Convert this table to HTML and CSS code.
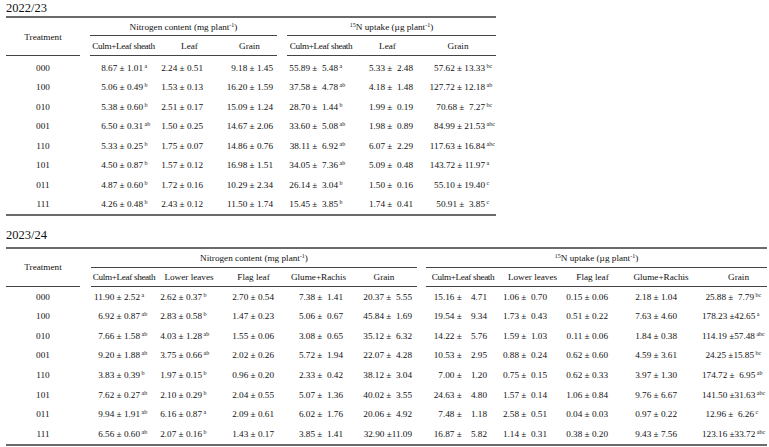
FILE: index.html
```
<!DOCTYPE html>
<html lang="en">
<head>
<meta charset="utf-8">
<title>Nitrogen content and 15N uptake</title>
<link rel="stylesheet" href="styles.css">
</head>
<body>
<div class="page">
  <div class="title">2022/23</div>
  <table class="tbl t1">
    <colgroup>
      <col class="c74"><col class="c10"><col class="c67"><col class="c65"><col class="c55"><col class="c10"><col class="c68"><col class="c65"><col class="c76">
    </colgroup>
    <thead>
      <tr class="hr1">
        <th rowspan="2" class="trt">Treatment</th>
        <th rowspan="2"></th>
        <th colspan="3" class="grp">Nitrogen content (mg plant<sup>-1</sup>)</th>
        <th rowspan="2"></th>
        <th colspan="3" class="grp"><sup>15</sup>N uptake (µg plant<sup>-1</sup>)</th>
      </tr>
      <tr class="hr2">
        <th class="sub culm">Culm+Leaf sheath</th>
        <th class="sub">Leaf</th>
        <th class="sub">Grain</th>
        <th class="sub culm">Culm+Leaf sheath</th>
        <th class="sub">Leaf</th>
        <th class="sub">Grain</th>
      </tr>
    </thead>
    <tbody>
      <tr class="first"><td>000</td><td></td><td>8.67 ± 1.01<span class="s">a</span></td><td>2.24 ± 0.51</td><td>9.18 ± 1.45</td><td></td><td>55.89 ±  5.48<span class="s">a</span></td><td>5.33 ±  2.48</td><td>57.62 ± 13.33<span class="s">bc</span></td></tr>
      <tr><td>100</td><td></td><td>5.06 ± 0.49<span class="s">b</span></td><td>1.53 ± 0.13</td><td>16.20 ± 1.59</td><td></td><td>37.58 ±  4.78<span class="s">ab</span></td><td>4.18 ±  1.48</td><td>127.72 ± 12.18<span class="s">ab</span></td></tr>
      <tr><td>010</td><td></td><td>5.38 ± 0.60<span class="s">b</span></td><td>2.51 ± 0.17</td><td>15.09 ± 1.24</td><td></td><td>28.70 ±  1.44<span class="s">b</span></td><td>1.99 ±  0.19</td><td>70.68 ±  7.27<span class="s">bc</span></td></tr>
      <tr><td>001</td><td></td><td>6.50 ± 0.31<span class="s">ab</span></td><td>1.50 ± 0.25</td><td>14.67 ± 2.06</td><td></td><td>33.60 ±  5.08<span class="s">ab</span></td><td>1.98 ±  0.89</td><td>84.99 ± 21.53<span class="s">abc</span></td></tr>
      <tr><td>110</td><td></td><td>5.33 ± 0.25<span class="s">b</span></td><td>1.75 ± 0.07</td><td>14.86 ± 0.76</td><td></td><td>38.11 ±  6.92<span class="s">ab</span></td><td>6.07 ±  2.29</td><td>117.63 ± 16.84<span class="s">abc</span></td></tr>
      <tr><td>101</td><td></td><td>4.50 ± 0.87<span class="s">b</span></td><td>1.57 ± 0.12</td><td>16.98 ± 1.51</td><td></td><td>34.05 ±  7.36<span class="s">ab</span></td><td>5.09 ±  0.48</td><td>143.72 ± 11.97<span class="s">a</span></td></tr>
      <tr><td>011</td><td></td><td>4.87 ± 0.60<span class="s">b</span></td><td>1.72 ± 0.16</td><td>10.29 ± 2.34</td><td></td><td>26.14 ±  3.04<span class="s">b</span></td><td>1.50 ±  0.16</td><td>55.10 ± 19.40<span class="s">c</span></td></tr>
      <tr><td>111</td><td></td><td>4.26 ± 0.48<span class="s">b</span></td><td>2.43 ± 0.12</td><td>11.50 ± 1.74</td><td></td><td>15.45 ±  3.85<span class="s">b</span></td><td>1.74 ±  0.41</td><td>50.91 ±  3.85<span class="s">c</span></td></tr>
    </tbody>
  </table>

  <div class="title second">2023/24</div>
  <table class="tbl t2">
    <colgroup>
      <col class="c74"><col class="c11"><col class="c66"><col class="c64"><col class="c65"><col class="c65"><col class="c66"><col class="c9"><col class="c74"><col class="c65"><col class="c55"><col class="c82"><col class="c65">
    </colgroup>
    <thead>
      <tr class="hr1">
        <th rowspan="2" class="trt">Treatment</th>
        <th rowspan="2"></th>
        <th colspan="5" class="grp">Nitrogen content (mg plant<sup>-1</sup>)</th>
        <th rowspan="2"></th>
        <th colspan="5" class="grp"><sup>15</sup>N uptake (µg plant<sup>-1</sup>)</th>
      </tr>
      <tr class="hr2">
        <th class="sub culm">Culm+Leaf sheath</th>
        <th class="sub">Lower leaves</th>
        <th class="sub">Flag leaf</th>
        <th class="sub">Glume+Rachis</th>
        <th class="sub">Grain</th>
        <th class="sub culm">Culm+Leaf sheath</th>
        <th class="sub">Lower leaves</th>
        <th class="sub">Flag leaf</th>
        <th class="sub">Glume+Rachis</th>
        <th class="sub grain-r">Grain</th>
      </tr>
    </thead>
    <tbody>
      <tr><td>000</td><td></td><td>11.90 ± 2.52<span class="s">a</span></td><td>2.62 ± 0.37<span class="s">b</span></td><td>2.70 ± 0.54</td><td>7.38 ±  1.41</td><td>20.37 ±  5.55</td><td></td><td>15.16 ±    4.71</td><td>1.06 ±  0.70</td><td>0.15 ± 0.06</td><td>2.18 ± 1.04</td><td>25.88 ±  7.79<span class="s">bc</span></td></tr>
      <tr><td>100</td><td></td><td>6.92 ± 0.87<span class="s">ab</span></td><td>2.83 ± 0.58<span class="s">b</span></td><td>1.47 ± 0.23</td><td>5.06 ±  0.67</td><td>45.84 ±  1.69</td><td></td><td>19.54 ±    9.34</td><td>1.73 ±  0.43</td><td>0.51 ± 0.22</td><td>7.63 ± 4.60</td><td>178.23 ±42.65<span class="s">a</span></td></tr>
      <tr><td>010</td><td></td><td>7.66 ± 1.58<span class="s">ab</span></td><td>4.03 ± 1.28<span class="s">ab</span></td><td>1.55 ± 0.06</td><td>3.08 ±  0.65</td><td>35.12 ±  6.32</td><td></td><td>14.22 ±    5.76</td><td>1.59 ±  1.03</td><td>0.11 ± 0.06</td><td>1.84 ± 0.38</td><td>114.19 ±57.48<span class="s">abc</span></td></tr>
      <tr><td>001</td><td></td><td>9.20 ± 1.88<span class="s">ab</span></td><td>3.75 ± 0.66<span class="s">ab</span></td><td>2.02 ± 0.26</td><td>5.72 ±  1.94</td><td>22.07 ±  4.28</td><td></td><td>10.53 ±    2.95</td><td>0.88 ±  0.24</td><td>0.62 ± 0.60</td><td>4.59 ± 3.61</td><td>24.25 ±15.85<span class="s">bc</span></td></tr>
      <tr><td>110</td><td></td><td>3.83 ± 0.39<span class="s">b</span></td><td>1.97 ± 0.15<span class="s">b</span></td><td>0.96 ± 0.20</td><td>2.33 ±  0.42</td><td>38.12 ±  3.04</td><td></td><td>7.00 ±    1.20</td><td>0.75 ±  0.15</td><td>0.62 ± 0.33</td><td>3.97 ± 1.30</td><td>174.72 ±  6.95<span class="s">ab</span></td></tr>
      <tr><td>101</td><td></td><td>7.62 ± 0.27<span class="s">ab</span></td><td>2.10 ± 0.29<span class="s">b</span></td><td>2.04 ± 0.55</td><td>5.07 ±  1.36</td><td>40.02 ±  3.55</td><td></td><td>24.63 ±    4.80</td><td>1.57 ±  0.14</td><td>1.06 ± 0.84</td><td>9.76 ± 6.67</td><td>141.50 ±31.63<span class="s">abc</span></td></tr>
      <tr><td>011</td><td></td><td>9.94 ± 1.91<span class="s">ab</span></td><td>6.16 ± 0.87<span class="s">a</span></td><td>2.09 ± 0.61</td><td>6.02 ±  1.76</td><td>20.06 ±  4.92</td><td></td><td>7.48 ±    1.18</td><td>2.58 ±  0.51</td><td>0.04 ± 0.03</td><td>0.97 ± 0.22</td><td>12.96 ±  6.26<span class="s">c</span></td></tr>
      <tr><td>111</td><td></td><td>6.56 ± 0.60<span class="s">ab</span></td><td>2.07 ± 0.16<span class="s">b</span></td><td>1.43 ± 0.17</td><td>3.85 ±  1.41</td><td>32.90 ±11.09</td><td></td><td>16.87 ±    5.82</td><td>1.14 ±  0.31</td><td>0.38 ± 0.20</td><td>9.43 ± 7.56</td><td>123.16 ±33.72<span class="s">abc</span></td></tr>
    </tbody>
  </table>
</div>
</body>
</html>
```
FILE: styles.css
```
html, body {
  margin: 0;
  padding: 0;
  background: #ffffff;
}

body {
  font-family: "Liberation Serif", "Times New Roman", serif;
  color: #111111;
}

.page {
  padding-left: 6px;
}

.title {
  font-size: 12.5px;
  line-height: 15px;
  padding-top: 1px;
}

.title.second {
  margin-top: 11px;
  margin-bottom: 4px;
}

.tbl {
  border-collapse: separate;
  border-spacing: 0;
  table-layout: fixed;
  border-top: 2px solid #6a6a6a;
  border-bottom: 2px solid #6a6a6a;
  font-size: 9.2px;
}

.t1 { width: 490px; }
.t2 { width: 761px; }

.c9 { width: 9px; }
.c10 { width: 10px; }
.c11 { width: 11px; }
.c55 { width: 55px; }
.c64 { width: 64px; }
.c65 { width: 65px; }
.c66 { width: 66px; }
.c67 { width: 67px; }
.c68 { width: 68px; }
.c74 { width: 74px; }
.c76 { width: 76px; }
.c82 { width: 82px; }

.tbl th {
  font-weight: normal;
  padding: 0;
  white-space: nowrap;
  vertical-align: middle;
  text-align: center;
  line-height: 12px;
}

.tbl sup {
  font-size: 6px;
  vertical-align: 3px;
  line-height: 0;
}

.tbl .trt {
  border-bottom: 1px solid #444444;
}

.tbl .grp,
.tbl .sub {
  border-bottom: 1px solid #444444;
}

.tbl .culm {
  letter-spacing: -0.35px;
}

.tbl .grain-r {
  padding-left: 8px;
}

.t1 .hr1 { height: 18px; }
.t1 .hr2 { height: 20px; }
.t2 .hr1 { height: 19px; }
.t2 .hr2 { height: 19px; }

.tbl td {
  padding: 0;
  white-space: pre;
  text-align: right;
  vertical-align: middle;
  line-height: 12px;
}

.tbl td:first-child {
  text-align: center;
}

.t1 tbody tr { height: 19.45px; }
.t1 tbody tr.first { height: 21.75px; }
.t1 tbody tr.first td { padding-top: 2.25px; }
.t2 tbody tr { height: 19.6px; }

.s {
  display: inline-block;
  width: 10px;
  box-sizing: border-box;
  padding-left: 1.5px;
  text-align: left;
  font-size: 6px;
  line-height: 6px;
  vertical-align: 3px;
}

/* table 1 value column offsets */
.t1 td:nth-child(3) { padding-right: 4px; }
.t1 td:nth-child(4) { padding-right: 19px; }
.t1 td:nth-child(5) { padding-right: 4px; }
.t1 td:nth-child(7) { padding-right: 7px; }
.t1 td:nth-child(8) { padding-right: 7px; }
.t1 td:nth-child(9) { padding-right: 1px; }

/* table 2 value column offsets */
.t2 td:nth-child(3) { padding-right: 7px; }
.t2 td:nth-child(4) { padding-right: 9px; }
.t2 td:nth-child(5) { padding-right: 12px; }
.t2 td:nth-child(6) { padding-right: 8px; }
.t2 td:nth-child(7) { padding-right: 5px; }
.t2 td:nth-child(9) { padding-right: 13px; }
.t2 td:nth-child(10) { padding-right: 18px; }
.t2 td:nth-child(11) { padding-right: 12px; }
.t2 td:nth-child(12) { padding-right: 25px; }
.t2 td:nth-child(13) { padding-right: 3px; }
```
